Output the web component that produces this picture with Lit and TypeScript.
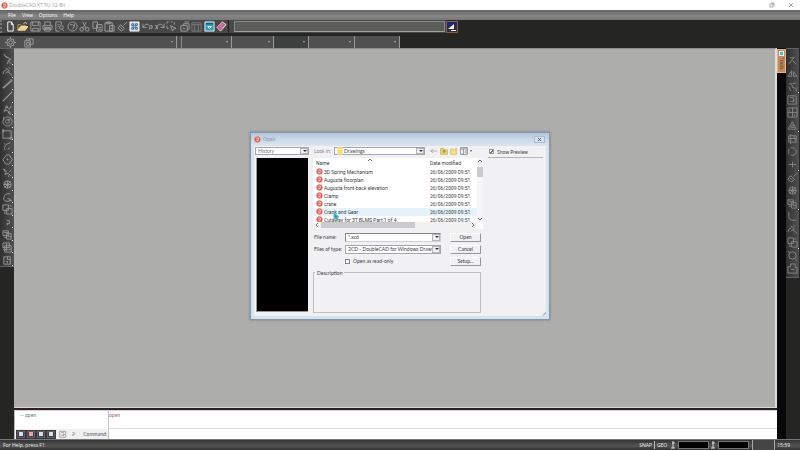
import { LitElement, html, svg, css } from "lit";
import { customElement, property } from "lit/decorators.js";

const GLYPHS: Record<string, unknown> = {
  newfile: svg`<path d="M3 1h4l2 3v7H3zM7 1v3h2" stroke="#fff"/>`,
  open: svg`<path d="M1 10V4h3l1 1h4v2" stroke="#c99b4a"/><path d="M1 10l3-4h8l-3 4z" fill="#f5cf7c" stroke="#f7e2b0"/><path d="M7 3q2-3 4 0" stroke="#ddd"/>`,
  save: svg`<path d="M1 1h10v10H1zM3 1v4h6V1M3 11V8h6v3"/>`,
  print: svg`<path d="M3 5V1h6v4M1 5h10v4H1zM3 8h6v3H3zM2 7h8"/>`,
  preview: svg`<path d="M2 1h6v3M2 1v10h4M4 4h2M4 6h1"/><circle cx="8" cy="7" r="2"/><path d="M9 9l2 2"/>`,
  globe: svg`<circle cx="6" cy="6" r="5"/><path d="M3 4h3l2 2-2 3M8 3v3"/>`,
  cut: svg`<path d="M4 1l4 7M8 1L4 8"/><circle cx="3" cy="9" r="2"/><circle cx="9" cy="9" r="2"/>`,
  copy: svg`<path d="M1 1h5v7H1zM5 4h6v7H5zM7 7h3M7 9h3"/>`,
  paste: svg`<path d="M1 2h8v9H1zM3 1h4v2H3zM6 5h5v6H6zM7 8h3"/>`,
  brush: svg`<path d="M11 1L7 5M4 4l4 4-3 3-4-3zM3 6l3 3"/>`,
  grid: svg`<path d="M1 1h10v10H1z" fill="#d9e2ea" stroke="#eee"/><path d="M3 3h2v2H3zM7 3h2v2H7zM3 7h2v2H3zM7 7h2v2H7z" stroke="#345b84"/><circle cx="6" cy="6" r="1" stroke="#2b86b8"/>`,
  undo: svg`<path d="M1 3v4h4M1 7q3-5 6-3t1 5M9 5h2v3H9"/>`,
  redo: svg`<path d="M11 3v4H7M11 7Q8 2 5 4T4 9M1 5h2v3H1"/>`,
  select: svg`<path d="M1 3V1h2M5 1h2M9 1v3M1 5v3h2"/><path d="M5 5l6 3-3 1-1 2z"/>`,
  layers: svg`<path d="M2 5h7v6H2zM5 5V3h6v6H9M6 1h5M4 8h3"/>`,
  table: svg`<path d="M1 2h10v9H1zM1 4h10M4 4v7M8 4v7" stroke="#7c7c7c"/>`,
  window: svg`<path d="M1 1h10v10H1z" fill="#2f9fc0" stroke="#f0f4f6"/><path d="M2 3h8" stroke="#14394e"/><path d="M4 6h4l-2 2z" stroke="#fff"/>`,
  book: svg`<path d="M1 7l6-6 4 3-6 7z" fill="#c052a8" stroke="#efe3ea"/><path d="M4 7l4-4M6 8l3-3" stroke="#d9b252"/>`,
  gear: svg`<circle cx="6" cy="6" r="4"/><circle cx="6" cy="6" r="2"/><path d="M6 0v2M6 10v2M0 6h2M10 6h2M2 2l1 1M9 9l1 1M10 2L9 3M2 10l1-1"/>`,
  layer: svg`<path d="M2 4h6v7H2zM4 4V2h7v6H8M4 6h3v3H4zM6 4l2-2"/>`,
  arrow: svg`<path d="M3 2l7 4-3 1-1 4M2 0l3 4M7 7l3 4"/>`,
  node: svg`<path d="M1 9q0-4 4-5M4 2l4 3-4 3M6 6l5 4M7 1l2 2"/>`,
  line: svg`<path d="M1 10l9-8" stroke-width="1.6"/><path d="M9 1h2v2"/>`,
  line2: svg`<path d="M1 11L11 1" stroke-width="1.3"/>`,
  poly: svg`<path d="M2 9L5 3l3 3 2-4M2 7h4l2 4h2"/><circle cx="5" cy="3" r="1"/><circle cx="8" cy="9" r="1"/>`,
  circle: svg`<circle cx="6" cy="6" r="5"/><circle cx="6" cy="6" r="2"/><path d="M2 1v3M6 4h3"/>`,
  rect: svg`<path d="M1 2h9v8H1z"/><path d="M0 1h2v2H0zM9 9h2v2H9z"/>`,
  curve: svg`<path d="M3 10V7q0-3 3-4l3-1M6 9l3-2M2 3h1"/>`,
  target: svg`<path d="M1 6l4-5h3l3 5-3 5H4z"/><path d="M5 6h2M6 5v2"/>`,
  spline: svg`<path d="M1 2l4 3-2 3 4-1 3 3M3 2v3M8 5l2-1M7 9v2"/>`,
  hatch: svg`<circle cx="6" cy="6" r="4"/><path d="M2 6h8M6 2v8M3 4l6 5M9 3L3 9"/>`,
  arc: svg`<path d="M9 2q-6-1-7 4t6 4l1-2-3-1M8 9l3 1"/>`,
  boxes: svg`<path d="M1 1h6v6H1zM5 5h6v6H5zM3 8v3M8 2h2"/>`,
  dot: svg`<path d="M5 4h3v3H5M5 8h2"/>`,
  block: svg`<path d="M1 2h6v5H1zM5 5h5v6H5zM2 4h5M6 8h4M2 9h3"/>`,
  block2: svg`<path d="M1 1h7v5H1zM3 4h7v7H3zM5 1v9M1 8h9"/>`,
  sheet: svg`<path d="M2 2h7v8H2zM6 2v3h3M4 7h2v2"/>`,
  slash: svg`<path d="M2 10l6-8M6 6l4 4M3 3h5"/>`,
  mirror: svg`<path d="M1 9l4-6v6zM7 4l4 5H7z"/>`,
  bend: svg`<path d="M2 3h3l1 4 4 1v3M2 6l2 5M6 3l4-1"/>`,
  frame: svg`<path d="M1 2h9v9H1zM3 4h4v4H3M6 9l3-3"/>`,
  cells: svg`<path d="M1 1h10v10H1zM6 1v10M1 6h10M3 3v2M8 8v2"/>`,
  tri: svg`<path d="M1 10l5-8 4 8zM4 8h4L6 5z"/>`,
  ring: svg`<path d="M4 2q6-1 6 4T4 10M2 3v6"/>`,
  bar: svg`<path d="M2 6h8M6 3v6"/>`,
  stack: svg`<path d="M2 3h8v7H2zM4 1v11M2 6h8M7 3l3 6"/>`,
  round: svg`<path d="M2 1v5q0 5 8 4"/>`,
  ring2: svg`<circle cx="6" cy="6" r="4"/><path d="M1 2h2M9 11h2"/>`,
  export: svg`<path d="M1 4h3V1h5v4h2v6H1zM4 7h4"/>`,
  logo: svg`<circle cx="6" cy="6" r="5" fill="#e0564c" stroke="#e88a80"/><path d="M5 3v6M5 3q4 0 3 3t-3 3" stroke="#fff"/>`,
  folder: svg`<path d="M2 1h8v10H2z" fill="#fbe07a" stroke="#f6e3a0"/>`,
  back: svg`<path d="M1 6h10M1 6l4-3M1 6l4 3" stroke="#8b97a8"/>`,
  up: svg`<path d="M1 2h4l1 2h5v7H1z" fill="#f3d465" stroke="#c8a83c"/><path d="M6 9V5M4 7l2-2 2 2" stroke="#3b6b3b"/>`,
  newfolder: svg`<path d="M1 3h4l1 2h4v6H1z" fill="#f6e183" stroke="#cdb35a"/><path d="M9 1v4M7 3h4" stroke="#e0a83a"/>`,
  views: svg`<path d="M1 1h10v10H1z" fill="#fff" stroke="#555d68"/><path d="M1 3h10M5 3v8M7 6h3M7 8h3" stroke="#555d68"/>`,
};

const LEFT = ["arrow","node","line","line2","poly","circle","rect","curve","target","spline","hatch","arc","boxes","dot","block","block2","sheet"];
const RIGHT = ["slash","mirror","bend","frame","cells","tri","stack","ring","bar","brush","hatch","block","round","node","boxes","ring2","export"];
const TOP = ["newfile","open","save","print","preview","globe","cut","copy","paste","brush","grid","undo","redo","select","layers","table","window","book"];
const TOP_LABELS = ["New","Open","Save","Print","Print preview","Publish","Cut","Copy","Paste","Match properties","Grid","Undo","Redo","Select","Layers","Table","Window","Help topics"];
const FILES = ["3D Spring Mechanism","Augusta floorplan","Augusta front-back elevation","Clamp","crane","Crank and Gear","Cutaway for 3T BLMS Part 1 of 4"];

@customElement("cad-icon")
export class CadIcon extends LitElement {
  @property() name = "";
  static styles = css`
    :host { display: block; width: 11px; height: 11px; flex: none; }
    svg { display: block; width: 100%; height: 100%; fill: none; stroke: var(--icon, #a0a0a0); stroke-width: 1; }
  `;
  render() {
    return html`<svg viewBox="0 0 12 12" aria-hidden="true">${GLYPHS[this.name]}</svg>`;
  }
}

@customElement("open-dialog")
export class OpenDialog extends LitElement {
  static styles = css`
    :host { display: block; width: 300px; font: 5px/8px "Liberation Sans Narrow", Lato, sans-serif; color: #3d3d42; }
    * { box-sizing: border-box; }
    button, input, select { font: inherit; color: inherit; margin: 0; padding: 0; border-radius: 0; min-width: 0; }
    .dialog { border: 1px solid #8296ab; background: #d5e3f1; padding: 0 3px 3px; box-shadow: 0 0 2px #777; }
    .title { height: 13px; display: flex; align-items: center; gap: 2px; margin: 0 -3px; padding: 0 4px 0 3px; color: #8794a3; background: linear-gradient(#b4c6da, #c9d9e8 50%, #d9e6f2); font-family: Lato, sans-serif; }
    .title cad-icon, .file cad-icon { width: 7px; height: 7px; }
    .close { margin-left: auto; width: 11px; height: 7px; border: 1px solid #aebdcc; background: #d4e0eb; display: grid; place-items: center; }
    .close svg { width: 5px; height: 5px; stroke: #54606e; fill: none; }
    .body { background: #f1f1f3; height: 170px; padding: 1px 3px 3px 1px; display: grid; grid-template-columns: 54px 170px 1fr; column-gap: 4px; position: relative; }
    .side, .center { display: flex; flex-direction: column; gap: 3px; }
    select { appearance: none; width: 100%; height: 8px; line-height: 6px; background: #fff; border: 1px solid #a5a5aa; padding: 0 7px 0 2px; overflow: hidden; display: block; }
    .combo { position: relative; display: block; height: 8px; min-width: 0; }
    .combo::before { content: ""; position: absolute; right: 1px; top: 1px; bottom: 1px; width: 6px; border: 1px solid #b4b4b9; background: #f1f1f3; }
    .combo::after { content: ""; position: absolute; right: 2px; top: 3px; border: 2px solid transparent; border-top-color: #333; border-bottom: 0; }
    .places { color: #77777e; }
    .preview { height: 154px; margin: 0 1px; background: #000; border: 1px solid #98929b; border-width: 0 0 1px 1px; }
    .look { display: grid; grid-template-columns: 17px 91px 1fr; gap: 3px; height: 8px; padding-left: 1px; color: #85858c; white-space: nowrap; font-family: Lato, sans-serif; }
    .look select { padding-left: 9px; color: #3d3d42; }
    .look .combo cad-icon { position: absolute; left: 2px; top: 0; width: 8px; height: 8px; }
    .tools { display: flex; gap: 2px; padding-left: 2px; align-items: center; }
    .tools button { border: 0; background: none; width: 8px; height: 8px; }
    .tools cad-icon { width: 8px; height: 8px; }
    .tools::after { content: ""; border: 1px solid transparent; border-top: 2px solid #555; border-bottom: 0; }
    .list { display: grid; grid-template-columns: 1fr 6px; grid-template-rows: 64px 7px; background: #fff; font-family: Roboto, "Open Sans", sans-serif; }
    .view { overflow: hidden; position: relative; }
    .sort { position: absolute; left: 55px; top: 0; }
    table { border-collapse: collapse; width: 100%; table-layout: fixed; }
    th, td { padding: 0; text-align: left; font-weight: 400; white-space: nowrap; overflow: hidden; height: 8px; line-height: 8px; }
    th { height: 10px; padding-left: 3px; }
    th:last-child, td:last-child { width: 49px; padding-left: 2px; }
    .file { display: flex; align-items: center; gap: 1px; padding-left: 3px; }
    .on { background: #e5f3fb; }
    .vbar { background: #f6f6f7; display: flex; flex-direction: column; align-items: center; justify-content: space-between; padding: 1px 0; }
    .vthumb { width: 6px; height: 10px; background: #cbcbcd; margin-bottom: 35px; }
    .hbar { background: #f1f1f2; display: flex; align-items: center; gap: 2px; padding: 0 2px; }
    .hthumb { width: 94px; height: 6px; background: #cbcbcd; margin-right: auto; }
    .chev { width: 4px; height: 4px; fill: none; stroke: #777; flex: none; }
    .fields { display: grid; grid-template-columns: 28px 96px 1fr; column-gap: 3px; row-gap: 3px; padding: 1px 2px 0 1px; align-items: center; }
    .fields .combo, .fields .combo input, .fields select { width: 100%; height: 9px; }
    .fields select { line-height: 7px; }
    .fields input[type="text"] { background: #fff; border: 1px solid #a5a5aa; border-color: #85858a #d0d0d3 #d0d0d3 #85858a; padding: 0 2px; display: block; }
    .fields button { width: 31px; justify-self: end; height: 9px; line-height: 7px; border: 1px solid #fff; border-right-color: #98989c; border-bottom-color: #98989c; background: #f1f1f3; }
    .label { white-space: nowrap; }
    .check { display: flex; align-items: center; gap: 3px; white-space: nowrap; }
    .check input { appearance: none; width: 5px; height: 5px; border: 1px solid #84848a; background: #fff; flex: none; display: block; }
    .check input:checked { background: linear-gradient(135deg, #fff 40%, #777 40% 70%, #fff 70%); border-color: #999; }
    fieldset { margin: 0 2px 0 0; padding: 0; border: 1px solid #bfc0c4; height: 44px; min-width: 0; }
    legend { margin-left: 1px; padding: 0 2px; }
    .right { margin-left: 1px; padding-top: 1px; }
    .right .check { padding: 0 0 1px 1px; height: 10px; border-bottom: 1px solid #b4b4b8; }
    .grip { position: absolute; right: 0; bottom: 0; width: 5px; height: 5px; background: repeating-linear-gradient(135deg, #b4b8c2 0 1px, transparent 1px 2px); clip-path: polygon(100% 0, 100% 100%, 0 100%); }
  `;
  render() {
    const chev = (d: string, cls = "") => html`<svg class="chev ${cls}" viewBox="0 0 4 4"><path d=${d}/></svg>`;
    return html`<section class="dialog" role="dialog" aria-label="Open">
      <header class="title"><cad-icon name="logo"></cad-icon><span>Open</span>
        <button class="close" aria-label="Close"><svg viewBox="0 0 5 5"><path d="M1 1l3 3M4 1L1 4"/></svg></button></header>
      <div class="body">
        <div class="side">
          <span class="combo places"><select aria-label="Places"><option>History</option></select></span>
          <div class="preview"></div>
        </div>
        <div class="center">
          <div class="look"><label for="look">Look in:</label>
            <span class="combo"><select id="look"><option>Drawings</option></select><cad-icon name="folder"></cad-icon></span>
            <div class="tools">${["back", "up", "newfolder", "views"].map((n) => html`<button aria-label=${n}><cad-icon name=${n}></cad-icon></button>`)}</div>
          </div>
          <div class="list">
            <div class="view">${chev("M0 3l2-2 2 2", "sort")}<table><thead><tr><th>Name</th><th>Date modified</th></tr></thead>
              <tbody>${FILES.map((f, i) => html`<tr class=${i === 5 ? "on" : ""}><td><div class="file"><cad-icon name="logo"></cad-icon>${f}</div></td><td>26/06/2009 09:51</td></tr>`)}</tbody></table></div>
            <div class="vbar">${chev("M0 3l2-2 2 2")}<div class="vthumb"></div>${chev("M0 1l2 2 2-2")}</div>
            <div class="hbar">${chev("M3 0L1 2l2 2")}<div class="hthumb"></div>${chev("M1 0l2 2-2 2")}</div>
          </div>
          <div class="fields">
            <label class="label" for="fname">File name:</label><span class="combo"><input id="fname" type="text" value="*.xcd"></span><button>Open</button>
            <label class="label" for="ftype">Files of type:</label><span class="combo"><select id="ftype"><option>2CD - DoubleCAD for Windows Drawing Fi</option></select></span><button>Cancel</button>
            <span></span><label class="check"><input type="checkbox">Open as read-only</label><button>Setup...</button>
          </div>
          <fieldset><legend>Description</legend></fieldset>
        </div>
        <div class="right"><label class="check"><input type="checkbox" checked>Show Preview</label></div>
        <div class="grip"></div>
      </div>
    </section>`;
  }
}

@customElement("app-root")
export class AppRoot extends LitElement {
  static styles = css`
    :host { display: flex; flex-direction: column; min-height: 100vh; position: relative; background: #252524; font: 5px/8px "Open Sans", "Noto Sans", sans-serif; color: #eee; }
    * { box-sizing: border-box; }
    button, input, select { font: inherit; color: inherit; margin: 0; padding: 0; border: 0; border-radius: 0; background: none; min-width: 0; }
    .title { height: 10px; background: #fefefe; color: #a5a5a5; display: flex; align-items: center; gap: 1px; padding: 0 6px 0 1px; }
    .title cad-icon { width: 7px; height: 7px; }
    .wins { margin-left: auto; display: flex; gap: 13px; }
    .wins svg { width: 6px; height: 6px; fill: none; stroke: #aaa; display: block; }
    .menu { height: 10px; display: flex; align-items: center; gap: 6px; padding-left: 8px; background: linear-gradient(#636363, #858585 60%, #777); color: #fff; }
    .bar { display: flex; align-items: center; background: #252524; }
    .tools { display: grid; grid-template-columns: repeat(18, 1fr); width: 229px; height: 13px; padding-left: 2px; background: #484848; border-left: 2px dotted #777; border-right: 1px solid #1e1e1e; place-items: center; }
    .field { height: 13px; width: 217px; padding: 1px 1px 1px 5px; background: #484848; }
    select { appearance: none; }
    .field select { display: block; width: 100%; height: 11px; background: #5b5b5a; border: 1px solid #898989; border-bottom-color: #a0a0a0; }
    .mono { width: 12px; height: 12px; background: linear-gradient(#1c2876 40%, #2d2f31 40%); border: 1px solid #886044; display: grid; place-items: center; }
    .mono svg { width: 8px; height: 8px; fill: #eee; display: block; }
    .props { height: 12px; margin-top: 3px; }
    .props .group { height: 12px; background: #505050; display: flex; align-items: center; border-right: 1px solid #999; }
    .first { width: 177px; padding-left: 5px; gap: 7px; }
    .drop { position: relative; height: 12px; flex: 1; }
    .drop select { width: 100%; height: 100%; display: block; }
    .drop::after { content: ""; position: absolute; right: 3px; top: 5px; border: 1px solid transparent; border-top: 2px solid #aaa; border-bottom: 0; }
    .b { width: 55px; padding-left: 4px; } .c { width: 42px; } .d { width: 35px; } .e { width: 46px; } .f { width: 45px; }
    .b .drop { border-left: 1px solid #888; }
    .d select { background: #3f4040; }
    .main { flex: 1; display: grid; grid-template-columns: 14px 1fr 9px 14px; }
    .rail { display: grid; align-self: start; justify-items: center; background: linear-gradient(90deg, #303030, #505050); border: 1px solid #626262; border-width: 1px 0; --icon: #989898; }
    .rail button { position: relative; width: 12px; display: grid; place-items: center; }
    .rail button::after { content: ""; position: absolute; right: 0; bottom: 0; width: 1px; height: 1px; background: #eee; }
    .left { grid-auto-rows: 12px; height: 219px; padding-top: 4px; align-content: space-between; }
    .rightrail { grid-auto-rows: 13px; padding: 5px 0 2px; margin-right: 1px; --icon: #868686; }
    .rightrail button:not(:nth-child(3n))::after { display: none; }
    .work { display: flex; flex-direction: column; min-width: 0; }
    .canvas { flex: 1; background: #adadac; border: solid #8e8e92; border-width: 1px 0 0; border-right: 2px solid #dededc; border-bottom: 1px solid #d8d8d5; }
    .cmd { margin-top: 2px; height: 29px; display: grid; grid-template-columns: 93px 1fr; border-top: 1px solid #e5c8df; border-left: 1px solid #bbb; background: #fefefe; color: #555; font-family: Lato, "Noto Sans", sans-serif; }
    .history { padding-left: 5px; height: 18px; color: #5d7a6d; }
    .entry { border-left: 1px solid #c3c3c8; display: flex; flex-direction: column; color: #a5625c; }
    .entry div { height: 18px; border-bottom: 1px solid #dcdcdc; }
    .entry input { height: 10px; width: 100%; }
    .cmdbar { display: flex; align-items: center; background: #f0f0f2; height: 10px; padding: 0 1px; }
    .chips { display: flex; background: #343a48; padding: 1px; height: 9px; gap: 2px; margin-right: 3px; }
    .chips button { width: 8px; height: 7px; background: #34405e; border: 1px solid #6d5a4c; display: grid; place-items: center; }
    .chips i { width: 4px; height: 4px; background: #d8dde6; }
    .chips button:nth-child(2) i { background: #eba59e; }
    .cmdbar cad-icon { width: 8px; height: 8px; margin-right: 2px; --icon: #8d8b86; }
    .cmdbar label { margin-left: auto; }
    .dock { background: #08080a; }
    .tab { width: 9px; height: 24px; margin-top: 1px; background: #c58b5c; border: 1px solid #e0b58e; display: flex; flex-direction: column; align-items: center; gap: 1px; color: #46352a; }
    .tab i { width: 5px; height: 5px; background: #2bc8d8; border: 1px solid #e4f5f4; margin-top: 1px; }
    .tab span { writing-mode: vertical-rl; line-height: 6px; }
    .status { height: 11px; display: flex; align-items: center; border-top: 1px solid #777; background: linear-gradient(#343434, #555 60%, #303030); padding: 0 10px 0 3px; }
    .help { margin-right: auto; }
    .snap { display: flex; gap: 2px; margin-right: 2px; }
    .snap span + span { border-left: 1px solid #bbb; padding-left: 2px; }
    .read { display: flex; align-items: center; gap: 2px; }
    .read svg { width: 5px; height: 8px; stroke: #ddd; fill: none; margin-left: 2px; }
    .read input { width: 31px; height: 8px; background: #000; border: 1px solid #777; }
    .gap { width: 23px; height: 10px; border: solid #aaa; border-width: 0 1px; margin: 0 2px 0 3px; background: #454545; }
    .overlay { position: absolute; inset: 1px 0 0 0; display: grid; place-items: center; pointer-events: none; }
    .overlay > * { pointer-events: auto; grid-area: 1 / 1; }
    .cursor { width: 6px; height: 9px; margin: 0 0 19px -128px; fill: #17a9b8; stroke: #5cb9c6; z-index: 1; }
  `;
  render() {
    const drop = (cls: string) => html`<div class="group ${cls}"><div class="drop"><select aria-label="Property ${cls}"></select></div></div>`;
    const rail = (items: string[]) => items.map((n) => html`<button aria-label=${n}><cad-icon name=${n}></cad-icon></button>`);
    const pin = html`<svg viewBox="0 0 5 8"><path d="M2 0v7M0 7h4M1 2h3"/></svg>`;
    return html`
      <header class="title"><cad-icon name="logo"></cad-icon><span>DoubleCAD XT 5U 32-Bit</span>
        <div class="wins"><button aria-label="Restore"><svg viewBox="0 0 6 6"><path d="M1 2h3v3H1zM2 1h3v3"/></svg></button>
        <button aria-label="Close"><svg viewBox="0 0 6 6"><path d="M1 1l4 4M5 1L1 5"/></svg></button></div></header>
      <nav class="menu">${["File", "View", "Options", "Help"].map((m) => html`<button>${m}</button>`)}</nav>
      <div class="bar">
        <div class="tools">${TOP.map((n, i) => html`<button aria-label=${TOP_LABELS[i]}><cad-icon name=${n}></cad-icon></button>`)}</div>
        <div class="field"><select aria-label="Layer set"></select></div>
        <button class="mono" aria-label="Colour"><svg viewBox="0 0 8 8"><path d="M0 6l6-5v5zM3 7h5v1H3z"/></svg></button>
      </div>
      <div class="bar props">
        <div class="group first"><cad-icon name="gear"></cad-icon><cad-icon name="layer"></cad-icon><div class="drop"><select aria-label="Layer"></select></div></div>
        ${["b", "c", "d", "e", "f"].map(drop)}
      </div>
      <main class="main">
        <div class="rail left">${rail(LEFT)}</div>
        <div class="work"><div class="canvas"></div>
          <div class="cmd">
            <div><div class="history">-- open</div>
              <div class="cmdbar"><div class="chips">${[1, 2, 3, 4].map((n) => html`<button aria-label="Mode ${n}"><i></i></button>`)}</div>
                <cad-icon name="frame"></cad-icon><cad-icon name="dot"></cad-icon><label for="cmd">Command:</label></div></div>
            <div class="entry"><div>open</div><input id="cmd" type="text"></div>
          </div>
        </div>
        <div class="dock"><button class="tab"><i></i><span>Tools</span></button></div>
        <div class="rail rightrail">${rail(RIGHT)}</div>
      </main>
      <footer class="status"><span class="help">For Help, press F1</span>
        <div class="snap"><span>SNAP</span><span>GEO</span></div>
        <div class="read">${pin}<input aria-label="X" type="text"></div>
        <div class="read">${pin}<input aria-label="Y" type="text"></div>
        <div class="gap"></div><span>15:59</span></footer>
      <div class="overlay"><open-dialog></open-dialog>
        <svg class="cursor" viewBox="0 0 6 9"><path d="M1 1v6l2-1 1 2 1-1-1-2h2z"/></svg></div>`;
  }
}
